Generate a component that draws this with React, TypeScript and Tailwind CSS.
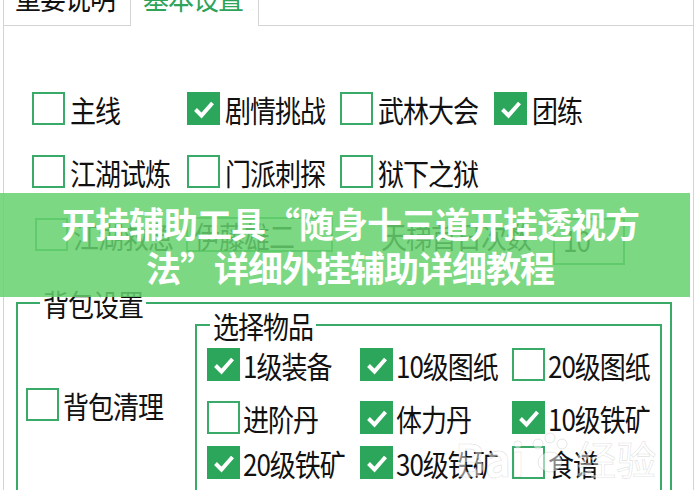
import React from "react";

type Item = { label: string; checked?: boolean };

function Box({ checked }: { checked?: boolean }) {
  if (checked) {
    return (
      <span className="flex h-[33px] w-[33px] shrink-0 items-center justify-center bg-[#2ba65a]">
        <svg width="33" height="33" viewBox="0 0 33 33">
          <path d="M8.5 17.5 L14.5 23.5 L25.5 11" fill="none" stroke="white" strokeWidth="4" />
        </svg>
      </span>
    );
  }
  return <span className="block h-[33px] w-[33px] shrink-0 border-2 border-[#3aaa68] bg-white" />;
}

function Label({ children, tight }: { children: React.ReactNode; tight?: boolean }) {
  return (
    <span
      className={`inline-block origin-center scale-y-[1.15] whitespace-nowrap text-[26px] tracking-[-1px] text-[#111] ${
        tight ? "leading-[26px]" : "leading-[33px]"
      }`}
    >
      {children}
    </span>
  );
}

function Check({ item, gap = "gap-[5px]" }: { item: Item; gap?: string }) {
  return (
    <div className={`flex h-[33px] items-center ${gap}`}>
      <Box checked={item.checked} />
      <Label>{item.label}</Label>
    </div>
  );
}

const topItems: Item[] = [
  { label: "主线" },
  { label: "剧情挑战", checked: true },
  { label: "武林大会" },
  { label: "团练", checked: true },
  { label: "江湖试炼" },
  { label: "门派刺探" },
  { label: "狱下之狱" },
];

const bagItems: Item[] = [
  { label: "1级装备", checked: true },
  { label: "10级图纸", checked: true },
  { label: "20级图纸" },
  { label: "进阶丹" },
  { label: "体力丹", checked: true },
  { label: "10级铁矿", checked: true },
  { label: "20级铁矿", checked: true },
  { label: "30级铁矿", checked: true },
  { label: "食谱" },
];

export default function App() {
  return (
    <div className="relative h-[490px] w-[700px] overflow-hidden bg-white font-['Noto_Sans_CJK_SC','Noto_Sans',sans-serif]">
      <div className="ml-[3px] w-[691px]">
        {/* tabs, top cut off by the window */}
        <div className="-mt-[24px] flex h-[50px]">
          <div className="w-[128px] border-x border-b border-[#d4d4d4] pl-[11px] pt-[3px]">
            <Label>重要说明</Label>
          </div>
          <div className="w-[128px] border-r border-[#d4d4d4] pl-[12px] pt-[3px]">
            <span className="inline-block origin-center scale-y-[1.15] text-[26px] leading-[33px] tracking-[-1px] text-[#2ea35a]">
              基本设置
            </span>
          </div>
          <div className="flex-1 border-b border-r border-[#d4d4d4]" />
        </div>

        <div className="h-[464px] border-x border-[#d4d4d4] pt-[66px]">
          <div className="grid grid-cols-[155px_153px_154px_auto] gap-y-[30px] pl-[28px]">
            {topItems.map((it) => (
              <Check key={it.label} item={it} />
            ))}
          </div>

          {/* row hidden under the banner */}
          <div className="mt-[30px] flex h-[33px] items-center pl-[31px]">
            <Check item={{ label: "江湖救急" }} />
            <div className="ml-[13px] flex h-[35px] w-[147px] items-center border-2 border-[#3aaa68] pl-[6px]">
              <Label>伊藤雄二</Label>
            </div>
            <div className="ml-[48px]">
              <Label>天梯首日次数</Label>
            </div>
            <div className="ml-[22px] mt-[14px] flex h-[47px] w-[72px] items-start border-2 border-[#3aaa68] pl-[8px] pt-[2px]">
              <Label>10</Label>
            </div>
          </div>

          <fieldset className="ml-[12px] mt-[39px] h-[230px] w-[656px] border-2 border-[#3aaa68] px-[8px] pb-0 pt-0">
            <legend className="ml-[14px] flex h-[26px] items-center px-[3px]">
              <Label tight>背包设置</Label>
            </legend>
            <div className="flex">
              <div className="w-[169px] pt-[72px]">
                <Check item={{ label: "背包清理" }} gap="gap-[4px]" />
              </div>
              <fieldset className="-mt-[4px] h-[200px] w-[467px] border-2 border-[#3aaa68] p-0">
                <legend className="ml-[13px] flex h-[26px] items-center px-[3px]">
                  <Label tight>选择物品</Label>
                </legend>
                <div className="grid grid-cols-[153px_152px_auto] grid-rows-[33px_33px_33px] pl-[10px] pt-[10px]">
                  {bagItems.slice(0, 3).map((it) => (
                    <Check key={it.label} item={it} gap="gap-[3px]" />
                  ))}
                  {bagItems.slice(3, 6).map((it) => (
                    <div key={it.label} className="mt-[20px]">
                      <Check item={it} gap="gap-[3px]" />
                    </div>
                  ))}
                  {bagItems.slice(6).map((it) => (
                    <div key={it.label} className="mt-[32px]">
                      <Check item={it} gap="gap-[3px]" />
                    </div>
                  ))}
                </div>
              </fieldset>
            </div>
          </fieldset>
        </div>
      </div>

      {/* watermark */}
      <div className="pointer-events-none absolute left-[455px] top-[432px] flex items-end gap-[4px] text-white/50">
        <span className="text-[44px] font-bold leading-[44px] [-webkit-text-stroke:1px_rgba(0,0,0,0.1)]">Bai</span>
        <svg width="44" height="44" viewBox="0 0 44 44" className="mb-[4px]">
          <g fill="rgba(255,255,255,0.5)" stroke="rgba(0,0,0,0.1)">
            <circle cx="10" cy="12" r="5" />
            <circle cx="22" cy="6" r="5" />
            <circle cx="34" cy="12" r="5" />
            <ellipse cx="22" cy="30" rx="12" ry="10" />
          </g>
        </svg>
        <span className="text-[40px] leading-[44px] [-webkit-text-stroke:1px_rgba(0,0,0,0.1)]">经验</span>
      </div>

      {/* title banner */}
      <div className="absolute left-0 top-[193px] flex h-[104px] w-[690px] flex-col items-center justify-center bg-[#66d16f]/[0.85] pl-[10px] text-center text-[35px] font-bold leading-[44px] tracking-[-1px] text-white">
        <div>开挂辅助工具“随身十三道开挂透视方</div>
        <div>法”详细外挂辅助详细教程</div>
      </div>
    </div>
  );
}
